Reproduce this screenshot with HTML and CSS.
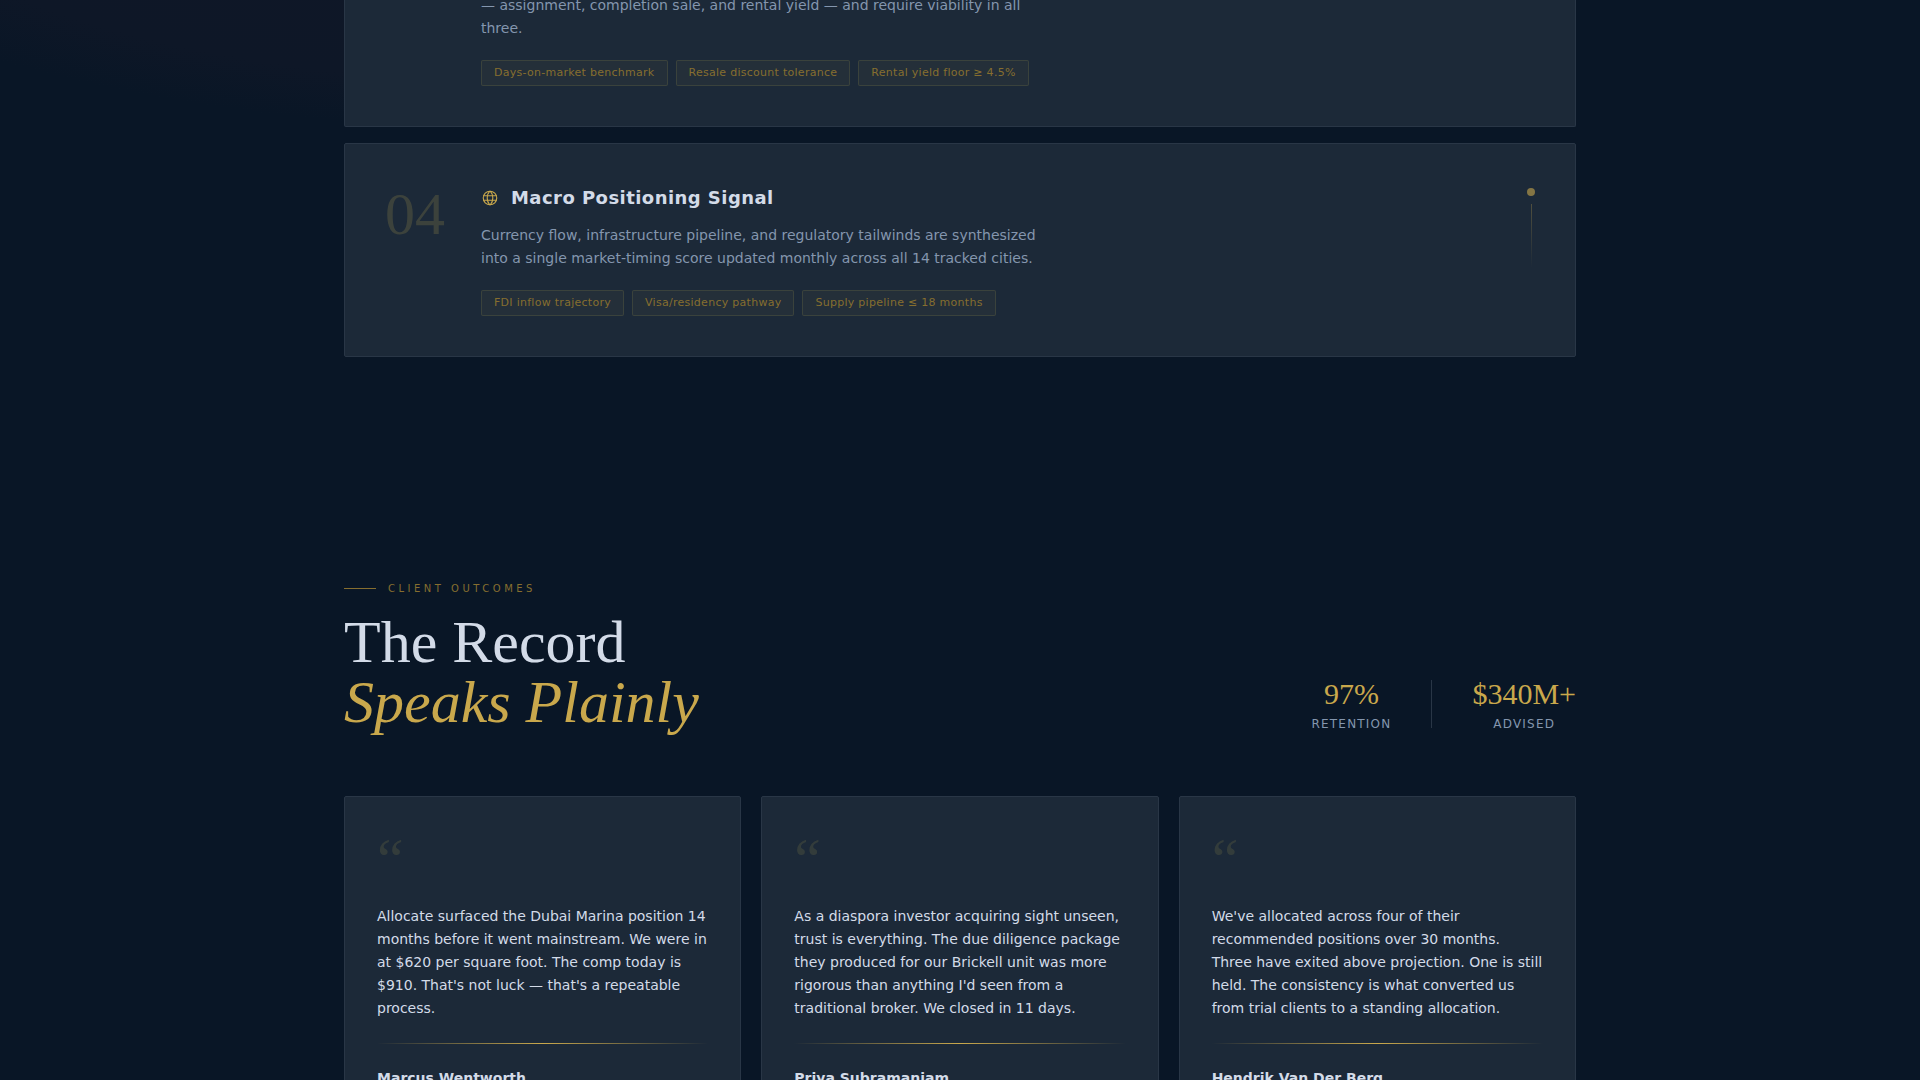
FILE: index.html
```html
<!DOCTYPE html>
<html lang="en">
<head>
    <meta charset="UTF-8">
    <meta name="viewport" content="width=device-width, initial-scale=1.0">
    <title>Allocate</title>
    <link rel="stylesheet" href="styles.css">
</head>
<body>
    <section class="filters container">
        <article class="filter-card filter-card-cut">
            <div class="filter-number"></div>
            <div class="filter-body">
                <p class="filter-text">— assignment, completion sale, and rental yield — and require viability in all three.</p>
                <ul class="tags">
                    <li>Days-on-market benchmark</li>
                    <li>Resale discount tolerance</li>
                    <li>Rental yield floor ≥ 4.5%</li>
                </ul>
            </div>
        </article>

        <article class="filter-card">
            <div class="filter-number">04</div>
            <div class="filter-body">
                <h3 class="filter-title">
                    <svg class="icon" viewBox="0 0 256 256" aria-hidden="true">
                        <circle cx="128" cy="128" r="96"/>
                        <path d="M88 128c0 37.500 13.500 70.600 33.500 92.900a8.700 8.700 0 0 0 13 0C154.500 198.600 168 165.500 168 128s-13.500-70.600-33.500-92.900a8.700 8.700 0 0 0-13 0C101.500 57.400 88 90.500 88 128Z"/>
                        <path d="M37.500 96h181M37.500 160h181"/>
                    </svg>
                    Macro Positioning Signal
                </h3>
                <p class="filter-text">Currency flow, infrastructure pipeline, and regulatory tailwinds are synthesized into a single market-timing score updated monthly across all 14 tracked cities.</p>
                <ul class="tags">
                    <li>FDI inflow trajectory</li>
                    <li>Visa/residency pathway</li>
                    <li>Supply pipeline ≤ 18 months</li>
                </ul>
            </div>
            <div class="marker">
                <span class="marker-dot"></span>
                <span class="marker-line"></span>
            </div>
        </article>
    </section>

    <section class="outcomes container">
        <div class="outcomes-header">
            <div>
                <p class="eyebrow">CLIENT OUTCOMES</p>
                <h2 class="heading">The Record<br><em>Speaks Plainly</em></h2>
            </div>
            <div class="stats">
                <div class="stat">
                    <div class="stat-value">97%</div>
                    <div class="stat-label">RETENTION</div>
                </div>
                <div class="stat-divider"></div>
                <div class="stat">
                    <div class="stat-value">$340M+</div>
                    <div class="stat-label">ADVISED</div>
                </div>
            </div>
        </div>

        <div class="quotes">
            <article class="quote-card">
                <div class="quote-mark">“</div>
                <p class="quote-text">Allocate surfaced the Dubai Marina position 14 months before it went mainstream. We were in at $620 per square foot. The comp today is $910. That's not luck — that's a repeatable process.</p>
                <div class="gold-rule"></div>
                <p class="quote-name">Marcus Wentworth</p>
            </article>
            <article class="quote-card">
                <div class="quote-mark">“</div>
                <p class="quote-text">As a diaspora investor acquiring sight unseen, trust is everything. The due diligence package they produced for our Brickell unit was more rigorous than anything I'd seen from a traditional broker. We closed in 11 days.</p>
                <div class="gold-rule"></div>
                <p class="quote-name">Priya Subramaniam</p>
            </article>
            <article class="quote-card">
                <div class="quote-mark">“</div>
                <p class="quote-text">We've allocated across four of their recommended positions over 30 months. Three have exited above projection. One is still held. The consistency is what converted us from trial clients to a standing allocation.</p>
                <div class="gold-rule"></div>
                <p class="quote-name">Hendrik Van Der Berg</p>
            </article>
        </div>
    </section>
</body>
</html>
```
FILE: styles.css
```css
:root {
    --navy: #091626;
    --card: #1c2938;
    --border: #293646;
    --gold: #c9a84c;
    --gold-dim: #866e2f;
    --text: #d3dbe8;
    --muted: #8496ae;
    --serif: "Liberation Serif", serif;
    --sans: "DejaVu Sans", sans-serif;
}

* {
    box-sizing: border-box;
    margin: 0;
    padding: 0;
}

body {
    height: 100vh;
    overflow: hidden;
    background: radial-gradient(40% 22% at 30% -12%, #101727 0%, #0e1727 90%, var(--navy) 110%) var(--navy);
    font-family: var(--sans);
    font-size: 14px;
    line-height: 23px;
    color: var(--text);
}

.container {
    max-width: 1280px;
    margin: 0 auto;
    padding: 0 24px;
}

/* Filters */
.filters {
    display: flex;
    flex-direction: column;
    gap: 16px;
    padding-bottom: 112px;
}

.filter-card {
    display: flex;
    gap: 32px;
    padding: 40px;
    background: var(--card);
    border: 1px solid var(--border);
    border-radius: 2px;
}

.filter-card-cut {
    margin-top: -6px;
    padding-top: 0;
    border-top: none;
}

.filter-number {
    flex: 0 0 64px;
    font-family: var(--serif);
    font-size: 60px;
    line-height: 60px;
    color: rgba(190, 172, 80, 0.2);
}

.filter-body {
    flex: 1;
}

.filter-title {
    display: flex;
    align-items: center;
    gap: 12px;
    margin-bottom: 12px;
    font-size: 18px;
    line-height: 28px;
    letter-spacing: 0.025em;
}

.icon {
    width: 18px;
    height: 18px;
    fill: none;
    stroke: var(--gold);
    stroke-width: 16;
    stroke-linecap: round;
    stroke-linejoin: round;
}

.filter-text {
    max-width: 576px;
    margin-bottom: 20px;
    color: var(--muted);
}

.tags {
    display: flex;
    flex-wrap: wrap;
    gap: 8px;
    list-style: none;
}

.tags li {
    padding: 4px 12px;
    border: 1px solid rgba(190, 172, 80, 0.15);
    border-radius: 2px;
    background: rgba(190, 172, 80, 0.05);
    font-size: 11px;
    line-height: 16px;
    letter-spacing: 0.025em;
    color: var(--gold-dim);
}

.marker {
    display: flex;
    flex-direction: column;
    align-items: center;
    gap: 8px;
    padding-top: 4px;
}

.marker-dot {
    width: 8px;
    height: 8px;
    border-radius: 50%;
    background: var(--gold);
    opacity: 0.6;
}

.marker-line {
    width: 1px;
    height: 64px;
    background: linear-gradient(to bottom, rgba(201, 168, 76, 0.3), transparent);
}

/* Client outcomes */
.outcomes {
    padding-top: 112px;
}

.outcomes-header {
    display: flex;
    justify-content: space-between;
    align-items: flex-end;
    margin-bottom: 64px;
}

.eyebrow {
    display: flex;
    align-items: center;
    gap: 12px;
    margin-bottom: 16px;
    font-size: 10px;
    line-height: 15px;
    letter-spacing: 0.35em;
    color: var(--gold-dim);
}

.eyebrow::before {
    content: "";
    width: 32px;
    height: 1px;
    background: var(--gold-dim);
}

.heading {
    font-family: var(--serif);
    font-size: 60px;
    font-weight: 400;
    line-height: 60px;
}

.heading em {
    color: var(--gold);
}

.stats {
    display: flex;
    align-items: center;
    gap: 40px;
}

.stat {
    text-align: center;
}

.stat-value {
    font-family: var(--serif);
    font-size: 30px;
    line-height: 36px;
    color: var(--gold);
}

.stat-label {
    margin-top: 4px;
    font-size: 12px;
    line-height: 16px;
    letter-spacing: 0.1em;
    color: var(--muted);
}

.stat-divider {
    width: 1px;
    height: 48px;
    background: var(--border);
}

.quotes {
    display: grid;
    grid-template-columns: repeat(3, 1fr);
    gap: 20px;
}

.quote-card {
    padding: 32px;
    background: var(--card);
    border: 1px solid var(--border);
    border-radius: 2px;
}

.quote-mark {
    margin-bottom: 16px;
    font-family: var(--serif);
    font-size: 60px;
    line-height: 60px;
    color: rgba(190, 172, 80, 0.15);
}

.gold-rule {
    height: 1px;
    margin: 23px 0 24px;
    background: linear-gradient(90deg, transparent, var(--gold), transparent);
}

.quote-name {
    font-weight: 700;
    line-height: 20px;
}
```
